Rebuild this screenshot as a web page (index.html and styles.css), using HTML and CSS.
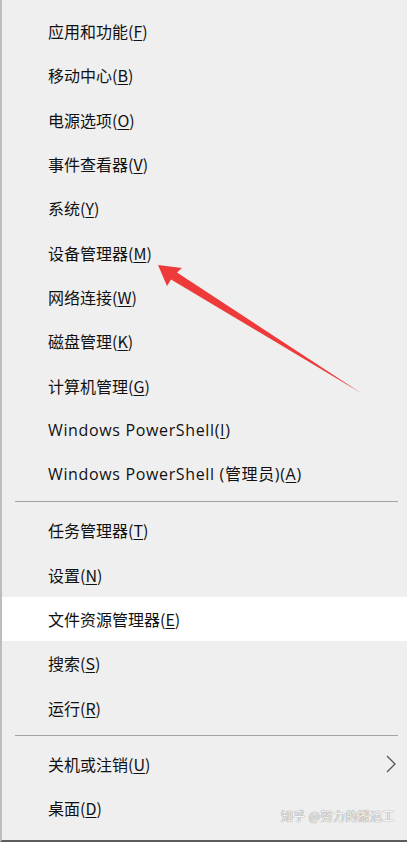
FILE: index.html
```html
<!DOCTYPE html>
<html lang="zh-CN">
<head>
<meta charset="utf-8">
<title>快速链接菜单</title>
<link rel="stylesheet" href="styles.css">
</head>
<body>
<div class="menu">
  <ul class="group group-first">
    <li class="item"><span>应用和功能(<u>F</u>)</span></li>
    <li class="item"><span>移动中心(<u>B</u>)</span></li>
    <li class="item"><span>电源选项(<u>O</u>)</span></li>
    <li class="item"><span>事件查看器(<u>V</u>)</span></li>
    <li class="item"><span>系统(<u>Y</u>)</span></li>
    <li class="item"><span>设备管理器(<u>M</u>)</span></li>
    <li class="item"><span>网络连接(<u>W</u>)</span></li>
    <li class="item"><span>磁盘管理(<u>K</u>)</span></li>
    <li class="item"><span>计算机管理(<u>G</u>)</span></li>
    <li class="item latin"><span>Windows PowerShell(<u>I</u>)</span></li>
    <li class="item latin"><span>Windows PowerShell (管理员)(<u>A</u>)</span></li>
  </ul>
  <div class="separator"></div>
  <ul class="group">
    <li class="item"><span>任务管理器(<u>T</u>)</span></li>
    <li class="item"><span>设置(<u>N</u>)</span></li>
    <li class="item selected"><span>文件资源管理器(<u>E</u>)</span></li>
    <li class="item"><span>搜索(<u>S</u>)</span></li>
    <li class="item"><span>运行(<u>R</u>)</span></li>
  </ul>
  <div class="separator"></div>
  <ul class="group">
    <li class="item submenu">
      <span>关机或注销(<u>U</u>)</span>
      <svg class="chevron" width="12" height="20" viewBox="0 0 12 20"><path d="M2 2 L10 10 L2 18" fill="none" stroke="#555" stroke-width="1.3"/></svg>
    </li>
    <li class="item"><span>桌面(<u>D</u>)</span></li>
  </ul>
  <div class="watermark">知乎 @努力的搬运工</div>
  <svg class="arrow" width="407" height="842" viewBox="0 0 407 842">
    <polygon points="158,265 182,268 177,272.5 361,393 171,279.5 167,286" fill="#ee3a3a"/>
  </svg>
</div>
</body>
</html>
```

FILE: styles.css
```css
html, body {
  margin: 0;
  padding: 0;
}

body {
  background: #efefef;
  font-family: "Noto Sans CJK SC", "Noto Sans", sans-serif;
  color: #111;
}

.menu {
  position: relative;
  box-sizing: border-box;
  width: 407px;
  height: 842px;
  border-left: 2px solid #bdbdbd;
  border-bottom: 2px solid #5c5c5c;
  padding-top: 9px;
}

.group {
  list-style: none;
  margin: 0;
  padding: 0;
}

.item {
  display: flex;
  align-items: center;
  justify-content: space-between;
  height: 44.3px;
  padding: 0 10px 0 46px;
  font-size: 16px;
  line-height: 1;
  white-space: nowrap;
}

.item u {
  text-decoration-thickness: 1px;
  text-underline-offset: 2px;
}

.latin {
  font-family: "Open Sans", "Noto Sans CJK SC", sans-serif;
  letter-spacing: 0.65px;
}

.selected {
  background: #ffffff;
}

.separator {
  height: 1px;
  margin: 5px 9px 6px 13px;
  background: #a3a3a3;
}

.chevron {
  display: block;
}

.watermark {
  position: absolute;
  right: 12px;
  bottom: 18px;
  font-size: 12px;
  line-height: 1;
  color: #f6f6f6;
  text-shadow: 0 0 1px #8a8a8a, 0 0 1px #8a8a8a;
  letter-spacing: 0.4px;
}

.arrow {
  position: absolute;
  left: -2px;
  top: 0;
  pointer-events: none;
}
```
